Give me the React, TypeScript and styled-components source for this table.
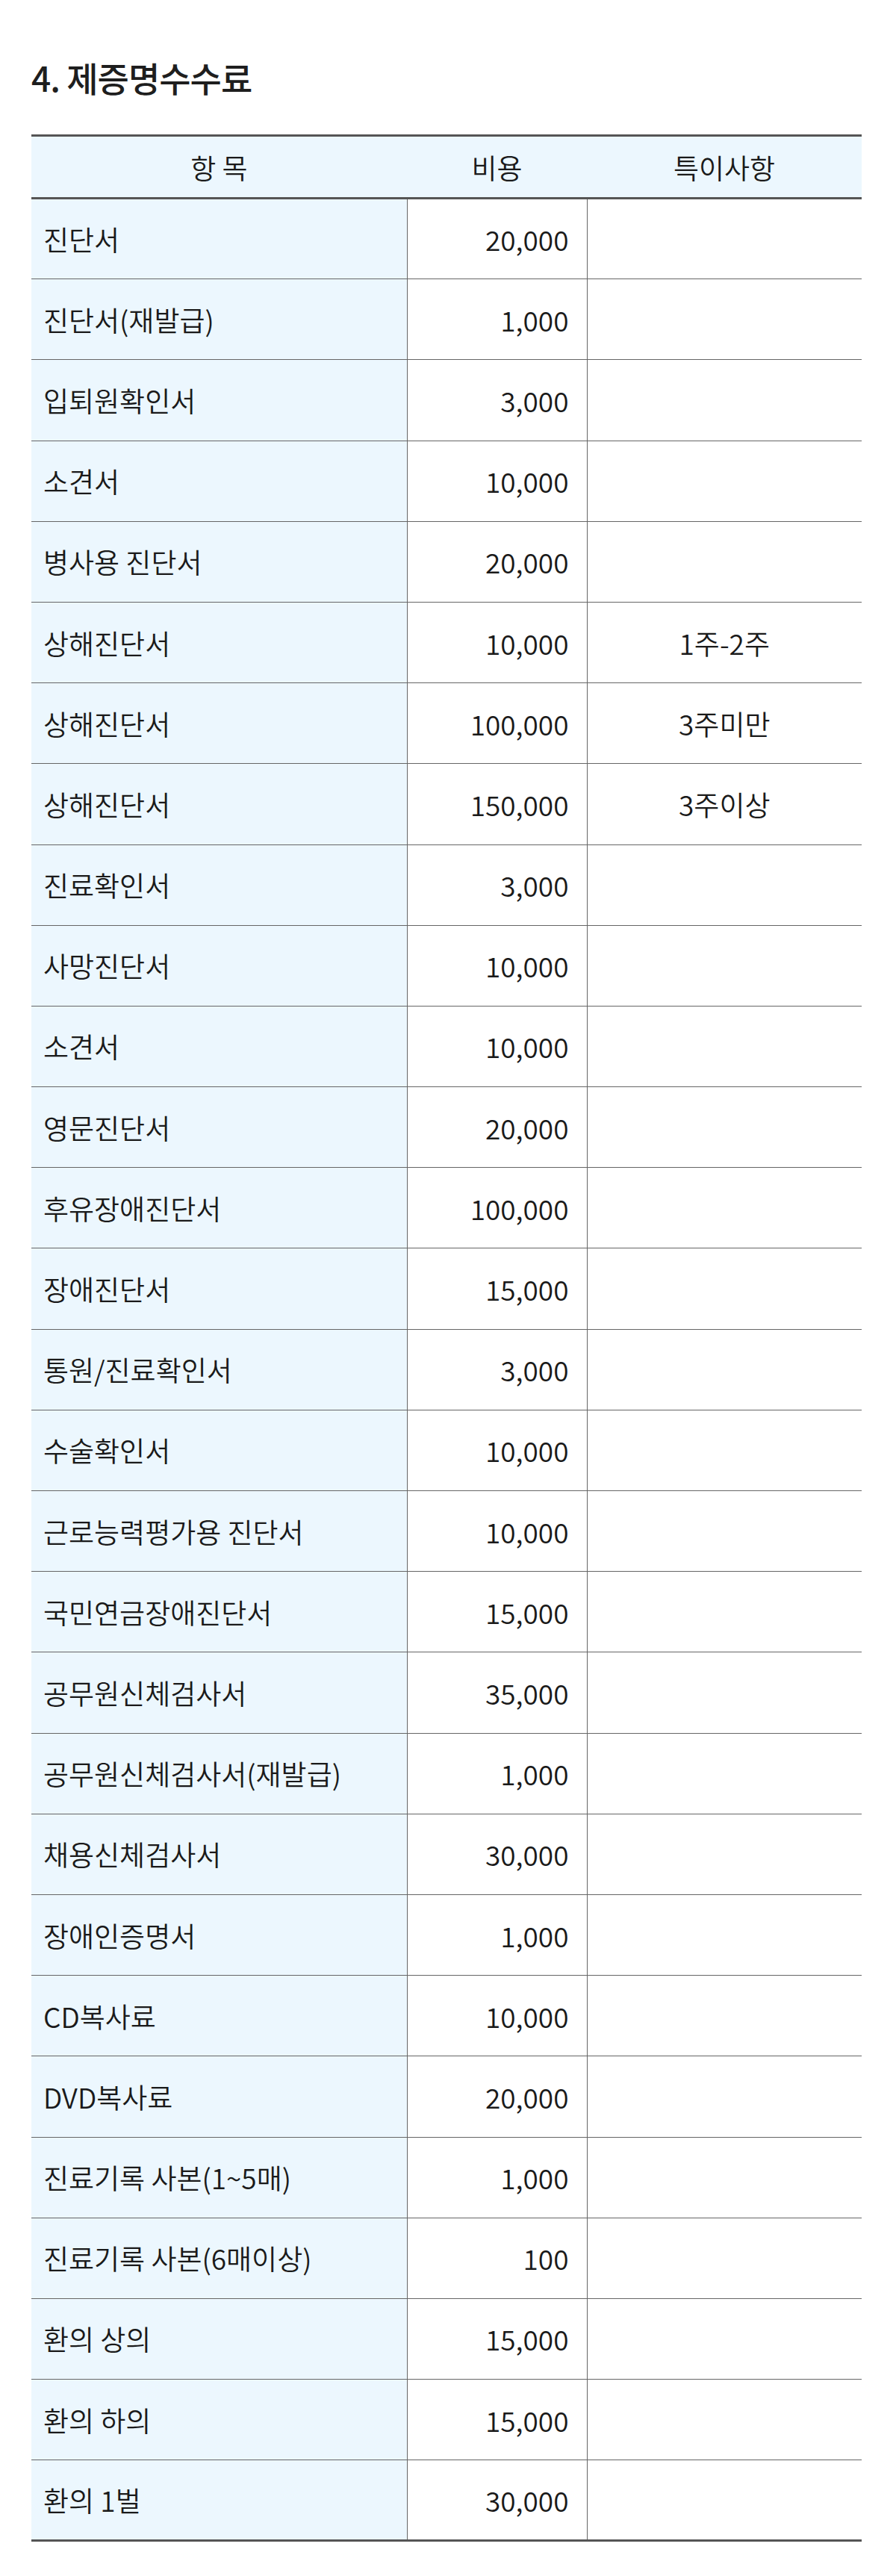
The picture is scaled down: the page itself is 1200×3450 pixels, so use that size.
import React from 'react';
import styled, { createGlobalStyle } from 'styled-components';

interface FeeRow {
  name: string;
  price: string;
  note?: string;
}

const rows: FeeRow[] = [
  { name: '진단서', price: '20,000' },
  { name: '진단서(재발급)', price: '1,000' },
  { name: '입퇴원확인서', price: '3,000' },
  { name: '소견서', price: '10,000' },
  { name: '병사용 진단서', price: '20,000' },
  { name: '상해진단서', price: '10,000', note: '1주-2주' },
  { name: '상해진단서', price: '100,000', note: '3주미만' },
  { name: '상해진단서', price: '150,000', note: '3주이상' },
  { name: '진료확인서', price: '3,000' },
  { name: '사망진단서', price: '10,000' },
  { name: '소견서', price: '10,000' },
  { name: '영문진단서', price: '20,000' },
  { name: '후유장애진단서', price: '100,000' },
  { name: '장애진단서', price: '15,000' },
  { name: '통원/진료확인서', price: '3,000' },
  { name: '수술확인서', price: '10,000' },
  { name: '근로능력평가용 진단서', price: '10,000' },
  { name: '국민연금장애진단서', price: '15,000' },
  { name: '공무원신체검사서', price: '35,000' },
  { name: '공무원신체검사서(재발급)', price: '1,000' },
  { name: '채용신체검사서', price: '30,000' },
  { name: '장애인증명서', price: '1,000' },
  { name: 'CD복사료', price: '10,000' },
  { name: 'DVD복사료', price: '20,000' },
  { name: '진료기록 사본(1~5매)', price: '1,000' },
  { name: '진료기록 사본(6매이상)', price: '100' },
  { name: '환의 상의', price: '15,000' },
  { name: '환의 하의', price: '15,000' },
  { name: '환의 1벌', price: '30,000' },
];

const App: React.FC = () => {
  return (
    <>
      <GlobalStyle />
      <StyledPage>
        <StyledTitle>4. 제증명수수료</StyledTitle>
        <StyledTable>
          <colgroup>
            <col style={{ width: 503 }} />
            <col style={{ width: 241 }} />
            <col />
          </colgroup>
          <thead>
            <tr>
              <StyledHead>항 목</StyledHead>
              <StyledHead>비용</StyledHead>
              <StyledHead>특이사항</StyledHead>
            </tr>
          </thead>
          <tbody>
            {rows.map((row, i) => (
              <StyledRow key={i} $last={i === rows.length - 1}>
                <StyledName>{row.name}</StyledName>
                <StyledPrice>{row.price}</StyledPrice>
                <StyledNote>{row.note}</StyledNote>
              </StyledRow>
            ))}
          </tbody>
        </StyledTable>
      </StyledPage>
    </>
  );
};

const GlobalStyle = createGlobalStyle`
  * {
    box-sizing: border-box;
  }
  body {
    margin: 0;
    background: #fff;
    color: #222;
    font-family: "Noto Sans CJK KR", "Noto Sans", sans-serif;
  }
`;

const StyledPage = styled.div`
  padding: 0 46px 40px 42px;
`;

const StyledTitle = styled.h2`
  margin: 0;
  padding: 68px 0 0;
  height: 180px;
  font-size: 46px;
  font-weight: 500;
  line-height: 70px;
  letter-spacing: -1px;
  color: #1e1e1e;
`;

const StyledTable = styled.table`
  width: 1112px;
  table-layout: fixed;
  border-collapse: collapse;
  border-top: 3px solid #555;
  font-size: 37px;
  font-weight: 350;
  color: #1a1a1a;
`;

const StyledHead = styled.th`
  height: 84px;
  background: #ecf7fe;
  border-bottom: 3px solid #555;
  font-weight: 350;
  text-align: center;
  padding: 0;
`;

const StyledRow = styled.tr<{ $last: boolean }>`
  td {
    height: 108.2px;
    padding: 0;
    border-bottom: ${(props) => (props.$last ? '3px solid #555' : '1px solid #666')};
  }
`;

const StyledName = styled.td`
  background: #ecf7fe;
  border-right: 1px solid #666;
  padding-left: 16px !important;
`;

const StyledPrice = styled.td`
  text-align: right;
  border-right: 1px solid #666;
  padding-right: 24px !important;
`;

const StyledNote = styled.td`
  text-align: center;
`;

export default App;
